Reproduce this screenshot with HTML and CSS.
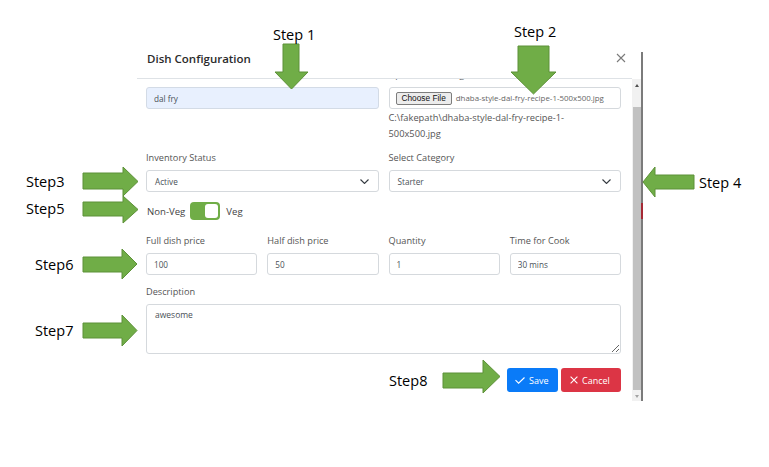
FILE: index.html
```html
<!DOCTYPE html>
<html lang="en">
<head>
<meta charset="utf-8">
<title>Dish Configuration</title>
<link rel="stylesheet" href="styles.css">
</head>
<body>
<div class="stage">
  <div class="modal">
    <div class="modal-header">
      <h5 class="modal-title">Dish Configuration</h5>
      <span class="close" aria-label="Close">
        <svg width="10" height="10" viewBox="0 0 10 10"><path d="M1 1L9 9M9 1L1 9" stroke="#7a7a7a" stroke-width="1.1" fill="none"/></svg>
      </span>
    </div>
    <div class="modal-scroll">
      <div class="modal-body">
        <div class="content">
          <div class="row2">
            <div class="group">
              <label class="lbl">Dish Name</label>
              <input class="field autofill" type="text" value="dal fry">
            </div>
            <div class="group">
              <label class="lbl">Upload Dish Image</label>
              <div class="file">
                <span class="file-btn">Choose File</span>
                <span class="file-name">dhaba-style-dal-fry-recipe-1-500x500.jpg</span>
              </div>
              <div class="path">C:\fakepath\dhaba-style-dal-fry-recipe-1-500x500.jpg</div>
            </div>
          </div>

          <div class="row2 row-select">
            <div class="group">
              <label class="lbl">Inventory Status</label>
              <div class="select"><span>Active</span>
                <svg width="9" height="5" viewBox="0 0 9 5"><path d="M0.5 0.5L4.5 4.5L8.5 0.5" stroke="#343a40" stroke-width="1.1" fill="none"/></svg>
              </div>
            </div>
            <div class="group">
              <label class="lbl">Select Category</label>
              <div class="select"><span>Starter</span>
                <svg width="9" height="5" viewBox="0 0 9 5"><path d="M0.5 0.5L4.5 4.5L8.5 0.5" stroke="#343a40" stroke-width="1.1" fill="none"/></svg>
              </div>
            </div>
          </div>

          <div class="toggle-row">
            <span class="tg-text">Non-Veg</span>
            <span class="switch"><span class="knob"></span></span>
            <span class="tg-text">Veg</span>
          </div>

          <div class="row4">
            <div class="group">
              <label class="lbl">Full dish price</label>
              <input class="field" type="text" value="100">
            </div>
            <div class="group">
              <label class="lbl">Half dish price</label>
              <input class="field" type="text" value="50">
            </div>
            <div class="group">
              <label class="lbl">Quantity</label>
              <input class="field" type="text" value="1">
            </div>
            <div class="group">
              <label class="lbl">Time for Cook</label>
              <input class="field" type="text" value="30 mins">
            </div>
          </div>

          <div class="desc">
            <label class="lbl">Description</label>
            <textarea class="area">awesome</textarea>
          </div>

          <div class="footer">
            <button class="btn btn-save">
              <svg width="10" height="7" viewBox="0 0 10 7"><path d="M0.5 3.2L3.6 6.2L9.5 0.5" stroke="#fff" stroke-width="1.1" fill="none"/></svg>
              <span>Save</span>
            </button>
            <button class="btn btn-cancel">
              <svg width="8" height="8" viewBox="0 0 8 8"><path d="M0.6 0.6L7.4 7.4M7.4 0.6L0.6 7.4" stroke="#fff" stroke-width="1.1" fill="none"/></svg>
              <span>Cancel</span>
            </button>
          </div>
        </div>
      </div>
      <div class="scrollbar">
        <div class="sb-btn"><span class="tri-up"></span></div>
        <div class="sb-gap-top"></div>
        <div class="sb-thumb"></div>
        <div class="sb-gap-bottom"></div>
        <div class="sb-btn sb-btn-down"><span class="tri-down"></span></div>
      </div>
    </div>
  </div>

  <svg class="annot" width="769" height="467" viewBox="0 0 769 467">
    <g class="arrow">
      <polygon points="283,44 299,44 299,72 308,72 291.5,89 275,72 283,72"/>
      <polygon points="518,46 549,46 549,72 556,72 533.5,94 511,72 518,72"/>
      <polygon points="83,173 123,173 123,167 138,181.5 123,196 123,189 83,189"/>
      <polygon points="83,202 123,202 123,196 138,209.5 123,223 123,216 83,216"/>
      <polygon points="83,257 122,257 122,249 137,264 122,279 122,272 83,272"/>
      <polygon points="83,323 122,323 122,315 137,330.5 122,346 122,338 83,338"/>
      <polygon points="694,175 655,175 655,167 643,182 655,197 655,189 694,189"/>
      <polygon points="443,373 483,373 483,360 500,376.5 483,393 483,388 443,388"/>
    </g>
    <text class="step" x="273" y="40">Step 1</text>
    <text class="step" x="514" y="37">Step 2</text>
    <text class="step" x="26" y="187">Step3</text>
    <text class="step" x="26" y="214">Step5</text>
    <text class="step" x="35" y="270">Step6</text>
    <text class="step" x="35" y="336">Step7</text>
    <text class="step" x="699" y="188">Step 4</text>
    <text class="step" x="389" y="386">Step8</text>
  </svg>
</div>
</body>
</html>
```

FILE: styles.css
```css
* { box-sizing: border-box; }

html, body {
  margin: 0;
  padding: 0;
  background: #ffffff;
}

body {
  width: 769px;
  height: 467px;
  overflow: hidden;
  font-family: "Open Sans", "Noto Sans", sans-serif;
  color: #212529;
}

.stage {
  position: relative;
  width: 769px;
  height: 467px;
  padding: 44px 0 0 137px;
}

.modal {
  position: relative;
  width: 506px;
  background: #fff;
}

/* window edge to the right of the scrollbar */
.modal::after {
  content: "";
  position: absolute;
  right: 0;
  top: 8px;
  bottom: 0;
  width: 2px;
  background: #7b7b7b;
}

/* bit of the page behind showing through */
.modal::before {
  content: "";
  position: absolute;
  right: 0;
  top: 159px;
  height: 16px;
  width: 2px;
  background: #a52834;
  z-index: 2;
}

.modal-header {
  height: 35px;
  margin-right: 11px;
  border-bottom: 1px solid #dee2e6;
  display: flex;
  align-items: flex-start;
  justify-content: space-between;
  padding: 7px 6px 0 10px;
}

.modal-title {
  margin: 0;
  font-size: 11.5px;
  line-height: 16px;
  font-weight: 600;
  color: #2b2b2b;
}

.close {
  display: flex;
  margin-top: 2px;
}

.modal-scroll {
  display: flex;
  height: 322px;
}

.modal-body {
  width: 495px;
  overflow: hidden;
  padding: 0 11px 0 9px;
}

.content {
  margin-top: -11px;
}

.row2 {
  display: grid;
  grid-template-columns: 1fr 1fr;
  column-gap: 10px;
}

.row4 {
  display: grid;
  grid-template-columns: repeat(4, 1fr);
  column-gap: 10px;
  margin-top: 14px;
}

.row-select {
  margin-top: 9px;
}

.lbl {
  display: block;
  font-size: 9.2px;
  line-height: 14px;
  color: #555;
  margin-bottom: 5px;
  white-space: nowrap;
}

.field {
  display: block;
  width: 100%;
  height: 22px;
  margin: 0;
  padding: 0 7px;
  border: 1px solid #d5d9dd;
  border-radius: 3px;
  background: #fff;
  font-family: "Open Sans", "Noto Sans", sans-serif;
  font-size: 8.2px;
  color: #495057;
  outline: none;
}

.autofill {
  background: #e8f0fe;
  border-color: #d3dbe6;
}

.file {
  height: 22px;
  border: 1px solid #d5d9dd;
  border-radius: 3px;
  display: flex;
  align-items: center;
  padding-left: 6px;
}

.file-btn {
  display: flex;
  align-items: center;
  height: 13px;
  padding: 0 5px;
  border: 1px solid #7d7d7d;
  border-radius: 2px;
  background: #ececec;
  font-family: "Liberation Sans", Arial, sans-serif;
  font-size: 8.3px;
  color: #111;
}

.file-name {
  margin-left: 4px;
  font-size: 7.9px;
  color: #666;
  white-space: nowrap;
}

.path {
  width: 205px;
  margin-top: 1px;
  font-size: 9.3px;
  line-height: 16px;
  color: #555;
}

.select {
  height: 22px;
  border: 1px solid #d5d9dd;
  border-radius: 3px;
  display: flex;
  align-items: center;
  justify-content: space-between;
  padding: 0 9px 0 8px;
  font-size: 8.2px;
  color: #495057;
}

.toggle-row {
  margin-top: 10px;
  height: 18px;
  display: flex;
  align-items: center;
  padding-left: 1px;
}

.tg-text {
  font-size: 9.6px;
  color: #444;
}

.switch {
  width: 30px;
  height: 18px;
  margin: 0 6px 0 5px;
  background: #70ad47;
  border-radius: 4px;
  display: flex;
  align-items: center;
  justify-content: flex-end;
  padding-right: 2px;
}

.knob {
  width: 13px;
  height: 14px;
  background: #fff;
  border-radius: 3px;
}

.desc {
  margin-top: 10px;
}

.area {
  display: block;
  width: 100%;
  height: 50px;
  margin: 0;
  padding: 4px 8px;
  border: 1px solid #d5d9dd;
  border-radius: 3px;
  font-family: "Open Sans", "Noto Sans", sans-serif;
  font-size: 8.5px;
  color: #495057;
  resize: vertical;
  outline: none;
}

.footer {
  margin-top: 14px;
  display: flex;
  justify-content: flex-end;
  gap: 3px;
}

.btn {
  height: 24px;
  display: flex;
  align-items: center;
  gap: 4px;
  border: none;
  border-radius: 3px;
  color: #fff;
  font-family: "Open Sans", "Noto Sans", sans-serif;
  font-size: 9px;
  margin: 0;
}

.btn-save {
  width: 51px;
  padding: 0 0 0 8px;
  background: #0a7bf8;
}

.btn-cancel {
  width: 60px;
  padding: 0 0 0 9px;
  background: #dc3545;
}

/* scrollbar drawn as part of the window */
.scrollbar {
  width: 9px;
  background: #f1f1f1;
  display: flex;
  flex-direction: column;
}

.sb-btn {
  height: 12px;
  display: flex;
  align-items: center;
  justify-content: center;
}

.sb-btn-down {
  height: 9px;
}

.sb-gap-top { height: 16px; }
.sb-gap-bottom { height: 2px; }

.sb-thumb {
  height: 283px;
  margin: 0 0 0 1px;
  background: #c1c1c1;
}

.tri-up {
  width: 0;
  height: 0;
  border-left: 2.5px solid transparent;
  border-right: 2.5px solid transparent;
  border-bottom: 3px solid #505050;
}

.tri-down {
  width: 0;
  height: 0;
  border-left: 2.5px solid transparent;
  border-right: 2.5px solid transparent;
  border-top: 3px solid #a3a3a3;
}

/* annotation overlay */
.annot {
  position: absolute;
  left: 0;
  top: 0;
  pointer-events: none;
}

.arrow polygon {
  fill: #70ad47;
  stroke: #5d9138;
  stroke-width: 1;
}

.step {
  font-family: "Open Sans", "Noto Sans", sans-serif;
  font-size: 14.5px;
  fill: #000;
}
```
